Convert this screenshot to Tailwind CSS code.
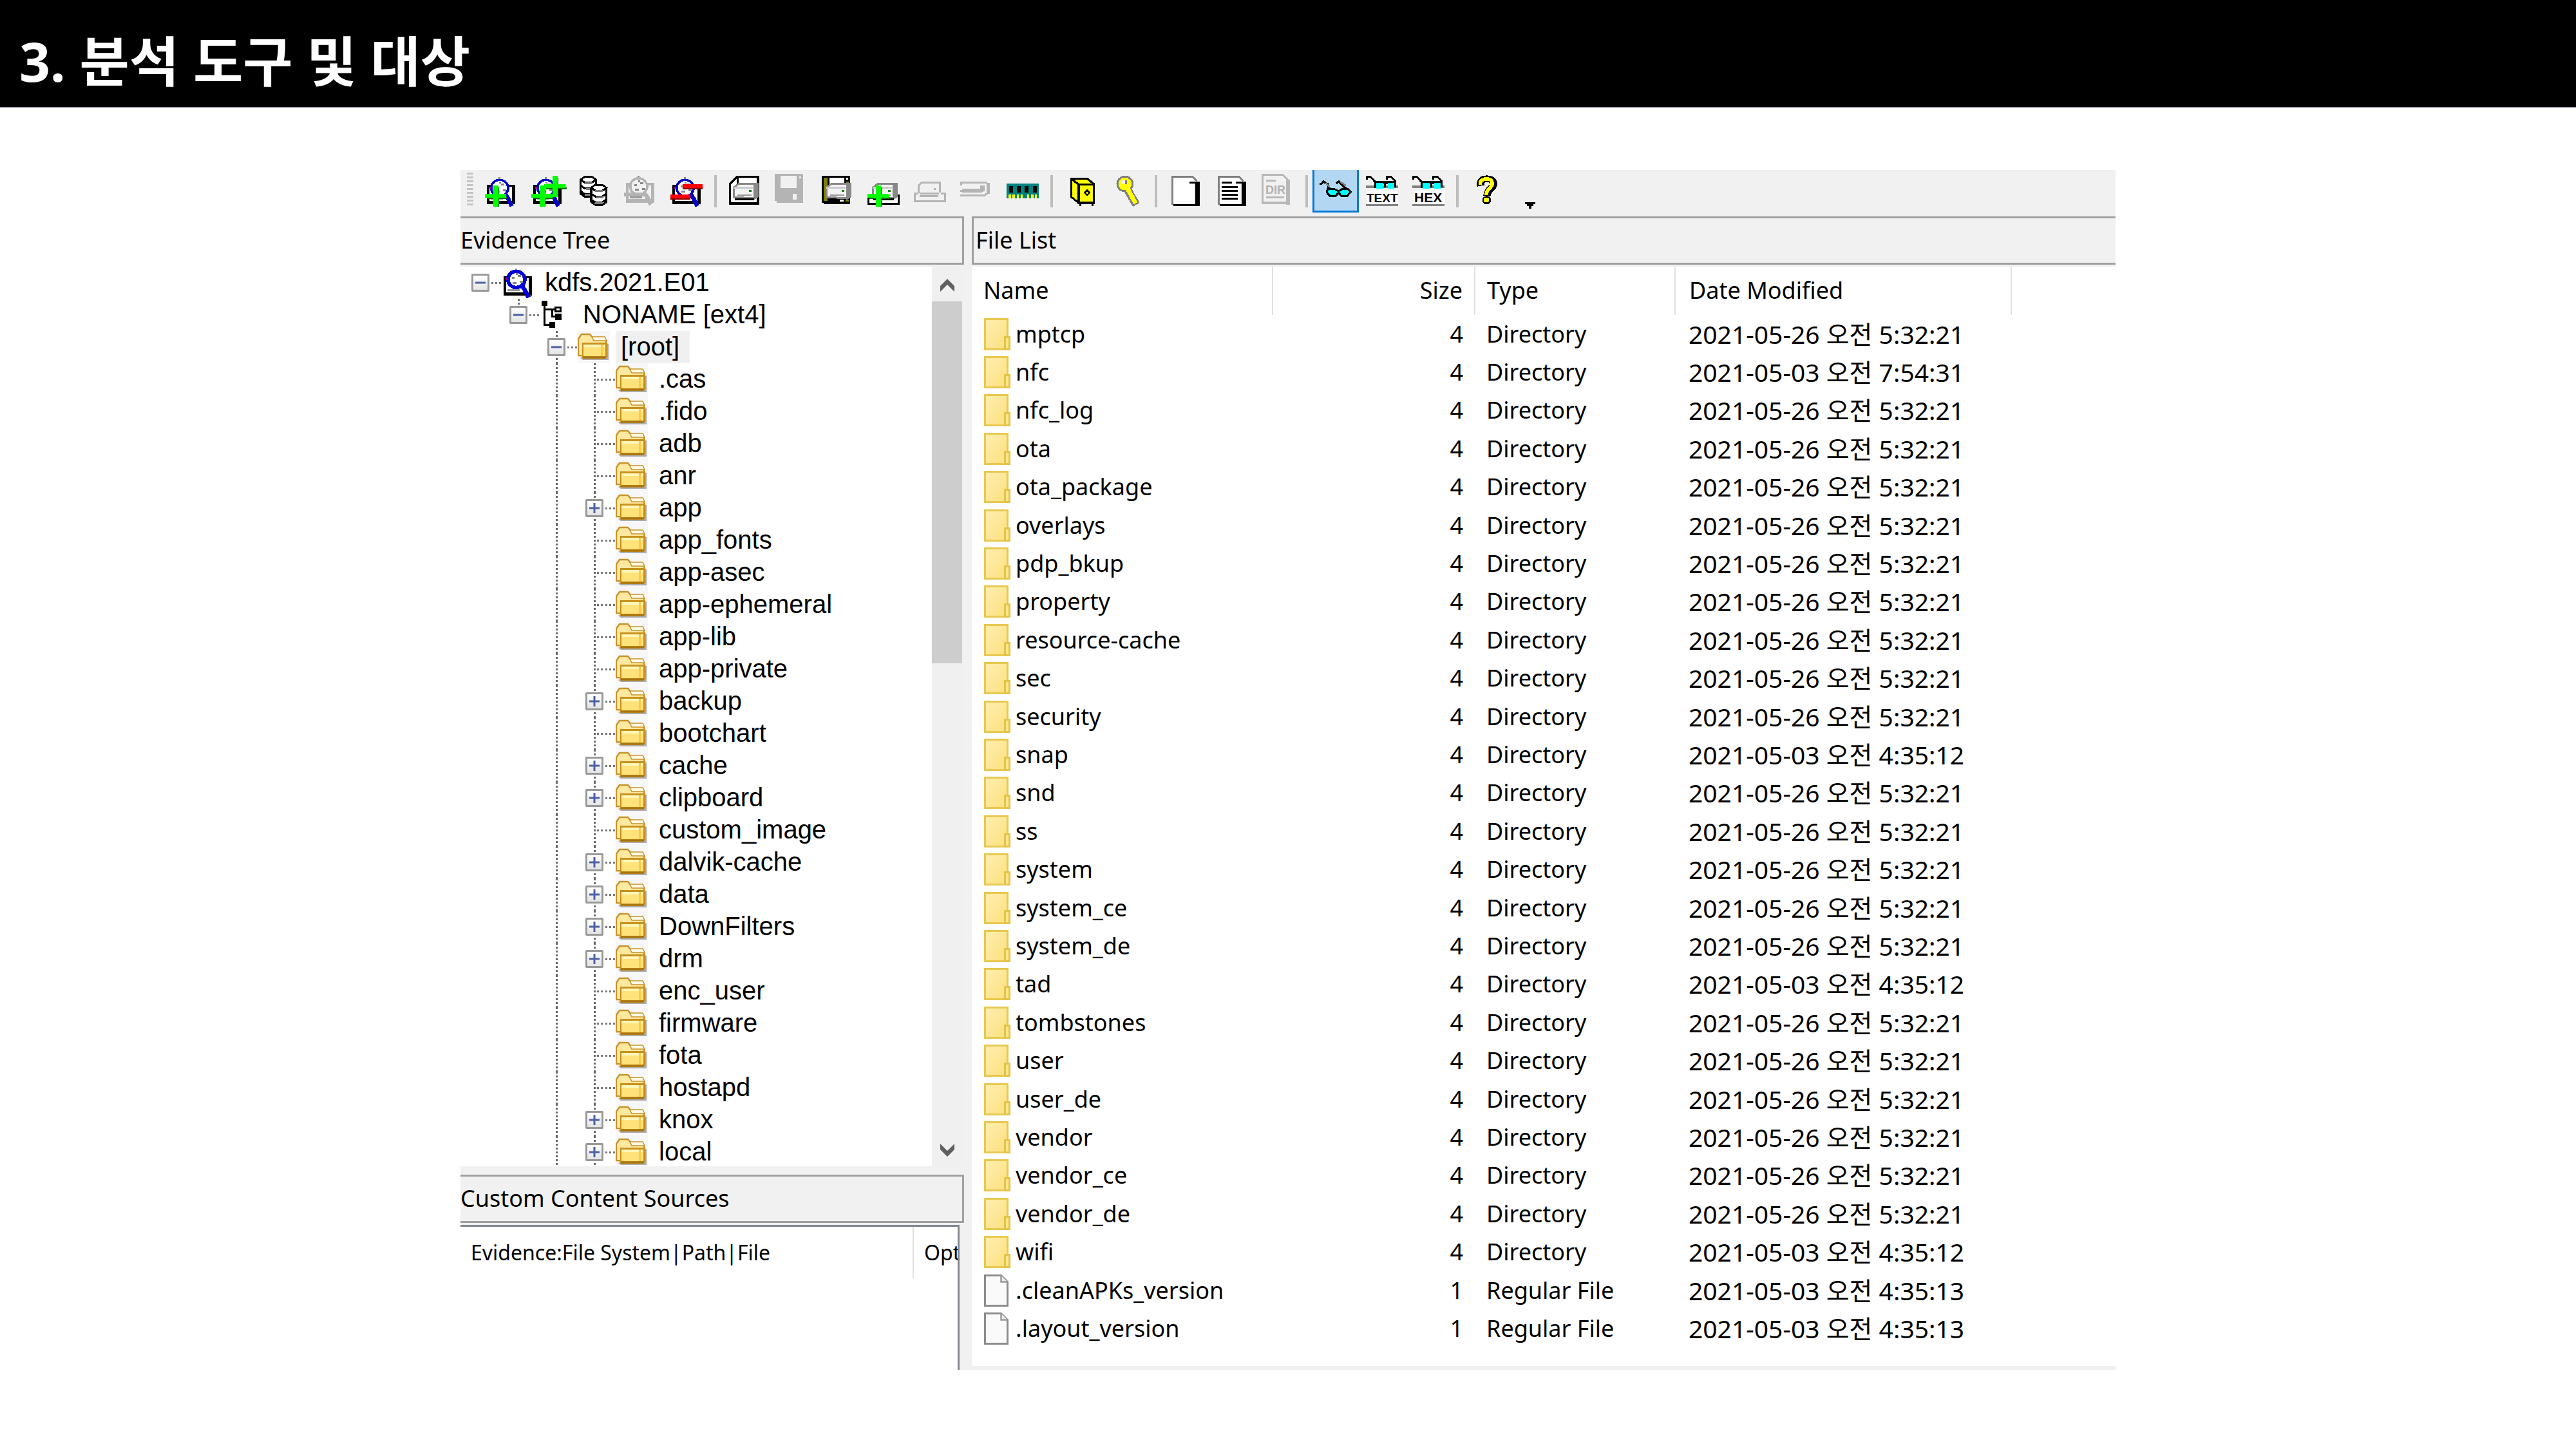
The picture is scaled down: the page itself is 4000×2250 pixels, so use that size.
<!DOCTYPE html>
<html lang="ko">
<head>
<meta charset="utf-8">
<title>3. 분석 도구 및 대상</title>
<script src="https://cdn.jsdelivr.net/npm/@tailwindcss/browser@4"></script>
</head>
<body class="bg-white text-black font-['Noto_Sans','Noto_Sans_CJK_KR',sans-serif]">

<header class="flex h-[167px] items-center border-b border-gray-500 bg-black pl-[30px] pt-6">
  <h1 class="text-[84px] leading-[100px] font-bold text-white whitespace-nowrap">3. 분석 도구 및 대상</h1>
</header>

<main class="mx-auto mt-[97px] w-full max-w-[2570px] bg-[#f1f1f1]">
  <div id="toolbar" role="toolbar" aria-label="Tools" class="flex h-[72px] items-start pl-[10px]"></div>

  <div class="flex gap-3">
    <section class="flex w-[782px] flex-none flex-col" aria-label="Evidence Tree">
      <h2 class="flex h-[75px] items-center border-y-3 border-r-3 border-[#a0a0a0] pb-[2px] text-[36px] leading-[48px]">Evidence Tree</h2>
      <div class="mt-[3px] mr-[3px] flex h-[1397px] overflow-hidden">
        <ul id="tree" class="min-w-0 flex-1 bg-white font-['Liberation_Sans',sans-serif] text-[40px] leading-[48px]"></ul>
        <div class="flex w-[47px] flex-none flex-col bg-[#f0f0f0]">
          <button aria-label="Scroll up" class="flex h-[54px] flex-none items-center justify-center pt-1">
            <svg width="26" height="22" viewBox="0 0 26 22"><path d="M13 1 24 12v9L13 10 2 21v-9z" fill="#606060"/></svg>
          </button>
          <div class="h-[562px] flex-none bg-[#cdcdcd]"></div>
          <button aria-label="Scroll down" class="mt-auto flex h-[50px] flex-none items-center justify-center">
            <svg width="26" height="22" viewBox="0 0 26 22"><path d="M13 21 24 10V1L13 12 2 1v9z" fill="#606060"/></svg>
          </button>
        </div>
      </div>
      <h2 class="mt-[13px] flex h-[75px] items-center border-y-3 border-r-3 border-[#a0a0a0] pb-[2px] text-[36px] leading-[48px]">Custom Content Sources</h2>
      <div class="mt-[3px] mr-[7px] flex-1 overflow-hidden border-t-3 border-r-3 border-[#828790] bg-white">
        <table class="w-full table-fixed text-left text-[32px] leading-[40px] whitespace-nowrap">
          <thead>
            <tr class="h-[80px]">
              <th class="w-[703px] border-r-2 border-[#e0e0e0] pl-[16px] font-normal">Evidence:File System|Path|File</th>
              <th class="overflow-hidden pl-[16px] font-normal">Opt</th>
            </tr>
          </thead>
        </table>
      </div>
    </section>

    <section class="min-w-0 flex-1 pb-[6px]" aria-label="File List">
      <h2 class="flex h-[75px] items-center border-y-3 border-l-3 border-[#a0a0a0] pb-[2px] pl-[3px] text-[36px] leading-[48px]">File List</h2>
      <div class="mt-[3px] bg-white pb-[29px]">
        <table class="w-full table-fixed text-left text-[36px] leading-[48px] whitespace-nowrap">
          <thead>
            <tr class="h-[75px]">
              <th class="w-[467px] border-r-2 border-[#e0e0e0] pb-[2px] pl-[18px] font-normal">Name</th>
              <th class="w-[314px] border-r-2 border-[#e0e0e0] pr-[18px] pb-[2px] text-right font-normal">Size</th>
              <th class="w-[311px] border-r-2 border-[#e0e0e0] pb-[2px] pl-[18px] font-normal">Type</th>
              <th class="w-[522px] border-r-2 border-[#e0e0e0] pb-[2px] pl-[21px] font-normal">Date Modified</th>
              <th></th>
            </tr>
          </thead>
          <tbody id="files"></tbody>
        </table>
      </div>
    </section>
  </div>
</main>

<script>
// Toolbar glyphs are drawn on a 16 x 16 grid inside a 50 x 48 box.
const svg = (shapes, text = '') =>
  `<svg width="50" height="48" viewBox="0 0 50 48" class="flex-none overflow-visible" aria-hidden="true"><g transform="scale(3.125 3)" shape-rendering="crispEdges">${shapes}</g>${text}</svg>`;
const r = (x, y, w, h, f) => `<rect x="${x}" y="${y}" width="${w}" height="${h}" fill="${f}"/>`;

const lens = (ink, blue, paper, ring = 1.2) =>
  r(1, 4.6, 14, 10.2, ink) + r(2.1, 5.7, 11.2, 7.2, paper) + r(3, 11.3, 6, 1, '#999') +
  r(6.8, 0.8, 1, 1, '#888') +
  `<circle cx="7.3" cy="6.3" r="4.2" fill="${paper}" stroke="${blue}" stroke-width="${ring}"/>` +
  `<path d="M5 5.5h1.5M8 4.5h1.5M5.5 8h2M9 7.5h1.5M7 3.5h1" stroke="#888"/>` + r(1.8, 5.6, 1, 1, ink === '#000' ? '#b000a0' : ink) +
  `<path d="M10.3 9.8l1.6 2.7 1.4 3.2" stroke="${blue}" stroke-width="2.2" fill="none"/>`;
const plus = (x, y) =>
  r(x + 1, y + 6, 10, 1, '#007000') + r(x + 6, y + 1, 1, 10, '#007000') + r(x, y + 4.2, 10.4, 2.2, '#0f0') + r(x + 4, y, 2.6, 11, '#0f0');
const minus = (x, y) => r(x, y + 1, 10, 1.8, '#8a0000') + r(x, y, 10, 2, '#f00');
const device = (y = 0) =>
  `<path d="M2.6 ${y + 11}V${y + 6.2}L5 ${y + 4.2}h9.5v6.5l-1.5 1z" fill="#f4f4f4" stroke="#888"/>` +
  r(12.6, y + 4, 1.9, 7.3, '#888') + r(2.5, y + 5.6, 9.8, .9, '#ccc') + r(4.5, y + 9.5, 7, .9, '#999') + r(10.3, y + 7.4, 1.2, 1, '#008000');
const deviceGrey =
  `<path d="M2.5 9V5L4 3.4h9V8.5" fill="none" stroke="#b4b4b4"/><path d="M3 9h9.5" stroke="#b4b4b4"/>` + r(10, 6.3, 1, 1, '#b4b4b4') +
  `<path d="M2.2 9H.5v4.3h15V9h-2.2M3 10.5h9" fill="none" stroke="#b4b4b4"/>`;
const page = r(1.3, 0, 10.5, 15, '#808080') + r(2.2, .9, 10.2, 14, '#fff') + r(12, 0, 4, 3, '#f1f1f1') +
  `<path d="M10.5 .5h1.3l2.2 2.2" stroke="#808080" fill="none"/>` + r(10.3, 3, 4.9, 1, '#000') + r(13.2, 3, 2, 12.8, '#000') + r(2.2, 14.8, 13, 1, '#000');
const specs =
  r(0, 5, 16, 1.3, '#808080') + r(.5, 7.8, 15.5, 6.4, '#fff') + r(0, 14.8, 16, 1, '#808080') +
  `<path d="M.5 2V.5h1.8L4.5 3M10.5 2V.5h2l2 2V6M4.5 3.3h10" stroke="#000" fill="none"/>` +
  r(4, 3, 11, 1.2, '#000') + r(4, 3, 1, 3.3, '#000') + r(9, 3, 1, 3, '#000') +
  r(5, 3.8, 3.5, 3, '#0ff') + r(10.8, 3.8, 3.4, 3, '#0ff');
const label = (t, x, s) => `<text x="${x}" y="41" font-size="${s}" font-weight="700" font-family="Liberation Sans, sans-serif">${t}</text>`;
const disc = (x, y) =>
  `<path d="M${x + .5} ${y + 2}v7.3l2 1.5h3.6l2-1.5V${y + 2}z" fill="#fff"/>` +
  `<path d="M${x + .5} ${y + 2}v7.3l2 1.5h3.6l2-1.5V${y + 2}M${x + .5} ${y + 5}l2 1.5h3.6l2-1.5M${x + .5} ${y + 8}l2 1.5h3.6l2-1.5" fill="none" stroke="#000"/>` +
  `<path d="M${x + .5} ${y + 2}l2-1.5h3.6l2 1.5-2 1.5h-3.6z" fill="#fff" stroke="#000"/>` +
  r(x + 2.4, y + 3.2, 3.8, 1, '#808080') + r(x + 3, y + 6.3, 3.6, 1, '#808080') + r(x + 2.4, y + 9.4, 4, 1, '#808080');

const icons = {
  addEvidence: svg(lens('#000', '#0000c8', '#fff') + plus(0, 5)),
  addAll: svg(lens('#000', '#0000c8', '#fff') + plus(0, 5) + plus(6.5, 0)),
  mount: svg(disc(1, 0) + disc(6.2, 4.2)),
  removeOff: svg(`<g transform="translate(0 -.8)">` + lens('#b4b4b4', '#b4b4b4', '#f1f1f1') + r(0, 9.5, 11, 2, '#b4b4b4') + '</g>'),
  removeAll: svg(lens('#000', '#0000c8', '#fff') + minus(0, 9.5) + minus(6, 4.2)),
  diskImage: svg(`<path d="M.8 14.3V4.2L4.3.6h10.4v13.7z" fill="#fff" stroke="#000" stroke-width="1.1"/><path d="M4.5.5v3.7" stroke="#000"/>` + device() + r(3.3, 11.8, 9.5, 1, '#000')),
  saveOff: svg(r(0, -1, 14, 14, '#b4b4b4') + r(1, 12, 13, 2, '#b4b4b4') + r(2.9, 0, 8, 6.3, '#f1f1f1') + r(12, .2, 1.2, 1, '#f1f1f1') + r(9, 9.3, 2, 3, '#f1f1f1')),
  saveImage: svg(r(.4, 0, 14, 14, '#000') + r(1.4, 13, 13, 1.8, '#000') + r(1.4, 1, 1.8, 12, '#808000') + r(4.2, 1, 7.4, 4, '#fff') + r(12.4, 1, 1, 1, '#fff') + r(12.4, 3, 1.4, 1, '#808000') + device() + r(9.3, 12.3, 2, 1, '#fff') + r(12.2, 12.3, 1.5, 1, '#808000')),
  addDrive: svg(`<path d="M2.5 10H.5v4.4h15V10h-2.2" fill="#fff" stroke="#000"/>` + device() + r(3, 11.5, 10, 1, '#000') + plus(0, 5)),
  driveOff: svg(deviceGrey),
  cardOff: svg(`<path d="M.5 5V3.4h13M0 7.9h11.5M0 10.2h12l2-1.5" fill="none" stroke="#b4b4b4"/>` + r(1, 6.5, 10, 2, '#b4b4b4') + r(10, 5, 2, 3, '#b4b4b4') + r(13, 3.5, 1.8, 5.8, '#b4b4b4')),
  memory: svg(r(0, 4, 16, 7.6, '#008080') + [1.2, 5, 9.1, 13].map(x => r(x, 5.2, 1.9, 3.3, '#000')).join('') + [1.1, 3, 5, 7, 10.2, 12.2, 14].map(x => r(x, 9.6, 1.1, 2, '#ff0')).join('')),
  protect: svg(`<path d="M3.4 1.6h8l3.2 2.6v9.8H7L3.4 11z" fill="#ff0" stroke="#000"/><path d="M3.5 1.6L7 4.5v9.5M7 4.5h7.7" fill="none" stroke="#000" stroke-width="1.1"/>` + r(6.5, 13.3, 8.6, 1.2, '#000') + r(7.4, 14.3, 1, 1.3, '#000') + r(13.3, 14.3, 1, 1.3, '#000') + `<path d="M11.2 7.5l1.2 1.2-1.2 1.2-1.2-1.2z" fill="#ff0" stroke="#000" stroke-width=".8"/>`),
  decrypt: svg(`<path d="M8.2 7l4.4 8" stroke="#808080" stroke-width="4"/><circle cx="7" cy="4.2" r="3.8" fill="#ff0" stroke="#808080" stroke-width="1"/><path d="M8.2 6.5l4.1 7.8" stroke="#ff0" stroke-width="2.2"/>` + r(5.3, 2.4, 2, 1.5, '#f1f1f1') + r(7, 2.2, .9, 2, '#808080')),
  exportFile: svg(page),
  exportHash: svg(page + [5.2, 7.2, 9.2, 11.4].map(y => r(3.2, y, 8, 1, '#000')).join('') + r(3.2, 3.1, 5, 1, '#000')),
  exportDir: svg(`<path d="M.5 13.8V-.5h10l3.2 3.2v11.1z" fill="none" stroke="#b8b8b8"/>` + r(2.3, 2, 4.6, 1, '#b8b8b8') + r(2.3, 10.5, 9, 1, '#b8b8b8') + r(12, 2, 2, 13, '#b8b8b8') + r(0, 13.8, 14, 1, '#b8b8b8'),
    '<text x="6" y="28" font-size="18" font-weight="700" fill="#b0b0b0" font-family="Liberation Sans, sans-serif">DIR</text>'),
  auto: svg(`<path d="M0 4.5h1l1-1.2 2.4 1.5v2l2 .6M8.3 4.3l1.2-1 3 3 2.5 2" fill="none" stroke="#000" stroke-width="1.1"/><path d="M3 4l2 2M10.5 3.5l2.5 2" stroke="#808080"/>` +
    `<path d="M4 7.3h3.6l1.8 1 1.8-1h3L15.4 8.6l-1.6 2.2h-3L9.4 9 8 10.8H5.2L3.6 9z" fill="#0ff" stroke="#000"/>`),
  text: svg(specs, label('TEXT', 1, 19)),
  hex: svg(specs, label('HEX', 3, 21)),
  help: svg(`<path d="M5.2 5.2C4.5 1.8 7 1.6 8.2 1.6c2.4 0 3.6 1 3.4 3C11.5 6.4 8.3 7 8.3 10.2" fill="none" stroke="#000" stroke-width="3.6"/><circle cx="8.2" cy="12.6" r="2.2" fill="#000"/>` +
    `<path d="M5 4.6C4.6 2 7 1.6 8 1.6c2.2 0 3.1 1 2.9 2.8C10.8 6.2 7.7 7 7.9 10" fill="none" stroke="#ff0" stroke-width="1.8"/><circle cx="8" cy="12.5" r="1.3" fill="#ff0"/>`),
};

const separator = '<span class="flex h-[66px] w-[18px] flex-none items-center justify-center"><span class="h-[50px] w-[4px] bg-[#bdbdbd]"></span></span>';
const groups = [
  [['addEvidence', 'Add Evidence Item'], ['addAll', 'Add All Attached Devices'], ['mount', 'Image Mounting'], ['removeOff', 'Remove Evidence Item'], ['removeAll', 'Remove All Evidence Items']],
  [['diskImage', 'Create Disk Image'], ['saveOff', 'Export Disk Image'], ['saveImage', 'Export Logical Image'], ['addDrive', 'Add to Custom Content Image'], ['driveOff', 'Create Custom Content Image'], ['cardOff', 'Decrypt AD1 Image'], ['memory', 'Capture Memory']],
  [['protect', 'Obtain Protected Files'], ['decrypt', 'Detect EFS Encryption']],
  [['exportFile', 'Export Files'], ['exportHash', 'Export File Hash List'], ['exportDir', 'Export Directory Listing']],
  [['auto', 'Automatic view'], ['text', 'Text view'], ['hex', 'Hex view']],
  [['help', 'Help']],
];
document.getElementById('toolbar').innerHTML =
  '<span class="mt-1 mr-[7px] h-[54px] w-[10px] flex-none bg-[repeating-linear-gradient(#c4c4c4_0_3px,transparent_3px_6px)]"></span>' +
  groups.map(g => g.map(([k, name]) =>
    `<button aria-label="${name}" class="flex h-[66px] w-[72px] flex-none items-center justify-center ${k === 'auto' ? 'border-x-3 border-b-3 border-[#0078d7] bg-[#b3d7f3]' : ''}">${icons[k]}</button>`
  ).join('')).join(separator) +
  '<button aria-label="More" class="flex h-[66px] w-[60px] flex-none items-end justify-center pb-[6px]"><svg width="16" height="10" viewBox="0 0 16 10" class="ml-[4px]"><path d="M0 0h16v3h-3v3H10v4H6V6H3V3H0z"/></svg></button>';

// Evidence tree: [level, state, label, icon]; state is '-' open, '+' closed, '' leaf.
const folder = `<svg width="50" height="50" viewBox="0 0 50 50" aria-hidden="true" class="bg-[#f7f7f7]">
  <path d="M4 42l4 3h40V20h-4z" fill="#8a8a8a" opacity=".7"/>
  <path d="M1 38V12l5-7h13l5 6h18l3 8v20z" fill="#ffe9a0" stroke="#c8932a" stroke-width="2.5"/>
  <path d="M22 9h20l3 6H25z" fill="#fffbe8" stroke="#c8932a" stroke-width="1.5"/>
  <path d="M2 36l5 6V18h39v22l-4 3H8z" fill="#c8901c"/>
  <rect x="9" y="21" width="34" height="18" fill="#ffe27a"/>
  <rect x="9" y="21" width="34" height="4" fill="#fff6b8"/>
  <rect x="36" y="21" width="3" height="18" fill="#ffc84a"/>
  <path d="M8 41h36" stroke="#a87410" stroke-width="3"/></svg>`;
const partition = `<svg width="50" height="50" viewBox="0 0 50 50" aria-hidden="true" shape-rendering="crispEdges"><g transform="translate(3 0)"><rect x="0" y="3" width="9" height="8"/><rect x="3" y="8" width="3" height="34"/><rect x="3" y="15" width="20" height="3"/><rect x="15" y="15" width="3" height="14"/><rect x="15" y="26" width="9" height="3"/><rect x="3" y="39" width="12" height="3"/><rect x="20" y="12" width="11" height="9"/><rect x="23" y="15" width="5" height="3" fill="#fff"/><rect x="21" y="23" width="10" height="10"/><rect x="12" y="36" width="9" height="9"/></g></svg>`;
const image = svg(lens('#000', '#0000d8', '#fff', 1.8));
const node = { image, partition, folder };
const names = ['.cas', '.fido', 'adb', 'anr', '+app', 'app_fonts', 'app-asec', 'app-ephemeral', 'app-lib', 'app-private', '+backup', 'bootchart', '+cache', '+clipboard', 'custom_image', '+dalvik-cache', '+data', '+DownFilters', '+drm', 'enc_user', 'firmware', 'fota', 'hostapd', '+knox', '+local'];
const rows = [[0, '-', 'kdfs.2021.E01', 'image'], [1, '-', 'NONAME [ext4]', 'partition'], [2, '-', '[root]', 'folder'],
  ...names.map(n => [3, n[0] === '+' ? '+' : '', n.replace('+', ''), 'folder'])];
const vline = 'bg-[repeating-linear-gradient(#666_0_3px,transparent_3px_6px)] bg-no-repeat bg-center';
const hline = 'h-[3px] bg-[repeating-linear-gradient(90deg,transparent_0_3px,#777_3px_6px)]';
document.getElementById('tree').innerHTML = rows.map(([level, state, text, icon]) => {
  const guides = Array.from({ length: level }, (_, i) =>
    `<span class="mr-[31px] w-[28px] flex-none self-stretch ${level === 3 && i === 2 ? vline + ' bg-size-[3px_100%]' : ''}"></span>`).join('');
  const own = level === 0 ? '' : level === 1 ? 'bg-[repeating-linear-gradient(#666_0_3px,transparent_3px_6px)] bg-no-repeat bg-top bg-size-[3px_50%]' : vline + ' bg-size-[3px_100%]';
  const toggle = state
    ? `<button aria-label="${state === '-' ? 'Collapse' : 'Expand'} ${text}" class="flex size-[28px] items-center justify-center rounded-xs border-3 border-[#999] bg-linear-to-b from-white to-[#e4e4e4]"><svg width="16" height="16" viewBox="0 0 16 16" aria-hidden="true"><path d="M0 8h16${state === '+' ? 'M8 0v16' : ''}" stroke="#4a61a5" stroke-width="3"/></svg></button>`
    : `<span class="ml-auto w-[13px] ${hline}"></span>`;
  return `<li class="flex h-[50px] items-center pl-[17px] whitespace-nowrap">${guides}` +
    `<span class="flex w-[28px] flex-none items-center self-stretch ${own}">${toggle}</span>` +
    `<span class="w-[19px] flex-none ${hline}"></span>` +
    `<span class="mr-[9px] flex w-[50px] flex-none">${node[icon]}</span>` +
    `<span class="pr-4 pb-[2px] pl-2 ${text === '[root]' ? 'bg-[#f0f0f0]' : ''}">${text}</span></li>`;
}).join('');

// File list
const dirIcon = '<svg width="41" height="50" viewBox="0 0 41 50" aria-hidden="true" class="flex-none"><defs><linearGradient id="g" x1="0" y1="0" x2="1" y2="1"><stop offset="0" stop-color="#ffeeb0"/><stop offset="1" stop-color="#fce07e"/></linearGradient></defs><rect x="1.5" y="1.5" width="35" height="47" fill="url(#g)" stroke="#e8c850" stroke-width="3"/><rect x="32.5" y="29.5" width="7" height="19" fill="#ffe58c" stroke="#e4c348" stroke-width="3"/></svg>';
const docIcon = '<svg width="41" height="50" viewBox="0 0 41 50" aria-hidden="true" class="flex-none"><path d="M1.5 1.5h25l10 10v37h-35z" fill="#fafafa" stroke="#8c8c8c" stroke-width="3"/><path d="M26.5 1.5v10h10" fill="#e8e8e8" stroke="#9a9a9a" stroke-width="2.5"/></svg>';
const common = '2021-05-26 오전 5:32:21', early = '2021-05-03 오전 4:35:12', last = '2021-05-03 오전 4:35:13';
const special = { nfc: '2021-05-03 오전 7:54:31', snap: early, tad: early, wifi: early, '.cleanAPKs_version': last, '.layout_version': last };
const files = ['mptcp', 'nfc', 'nfc_log', 'ota', 'ota_package', 'overlays', 'pdp_bkup', 'property', 'resource-cache', 'sec', 'security', 'snap', 'snd', 'ss', 'system', 'system_ce', 'system_de', 'tad', 'tombstones', 'user', 'user_de', 'vendor', 'vendor_ce', 'vendor_de', 'wifi', '.cleanAPKs_version', '.layout_version'];
document.getElementById('files').innerHTML = files.map(n => {
  const doc = n[0] === '.';
  return `<tr class="h-[59px] nth-[5n+3]:h-[60px] nth-[5n+5]:h-[60px]"><td class="pl-[19px]"><span class="flex items-center gap-2">${doc ? docIcon : dirIcon}<span>${n}</span></span></td>` +
    `<td class="pr-[18px] text-right">${doc ? 1 : 4}</td><td class="pl-[18px]">${doc ? 'Regular File' : 'Directory'}</td>` +
    `<td class="pl-[21px] text-[39px]">${special[n] || common}</td><td></td></tr>`;
}).join('');
</script>
</body>
</html>
